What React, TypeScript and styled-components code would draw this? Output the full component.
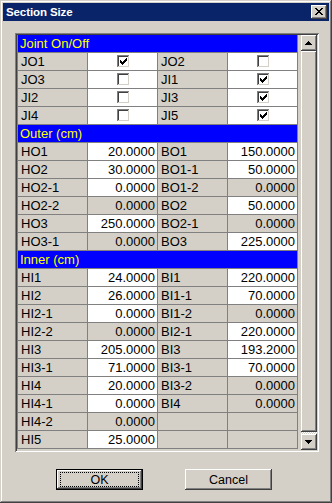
import styled, { createGlobalStyle, css } from 'styled-components';

const Global = createGlobalStyle`
	html, body {
		margin: 0;
		padding: 0;
		background: #d4d0c8;
	}
	* {
		box-sizing: border-box;
	}
`;

const FACE = '#d4d0c8';
const SHADOW = '#808080';
const DARK = '#404040';

type Row =
	| { kind: 'head'; title: string }
	| { kind: 'check'; a: string; av: boolean; b: string; bv: boolean }
	| { kind: 'value'; a?: string; av?: string; aEdit?: boolean; b?: string; bv?: string; bEdit?: boolean };

const rows: Row[] = [
	{ kind: 'head', title: 'Joint On/Off' },
	{ kind: 'check', a: 'JO1', av: true, b: 'JO2', bv: false },
	{ kind: 'check', a: 'JO3', av: false, b: 'JI1', bv: true },
	{ kind: 'check', a: 'JI2', av: false, b: 'JI3', bv: true },
	{ kind: 'check', a: 'JI4', av: false, b: 'JI5', bv: true },
	{ kind: 'head', title: 'Outer (cm)' },
	{ kind: 'value', a: 'HO1', av: '20.0000', aEdit: true, b: 'BO1', bv: '150.0000', bEdit: true },
	{ kind: 'value', a: 'HO2', av: '30.0000', aEdit: true, b: 'BO1-1', bv: '50.0000', bEdit: true },
	{ kind: 'value', a: 'HO2-1', av: '0.0000', aEdit: true, b: 'BO1-2', bv: '0.0000' },
	{ kind: 'value', a: 'HO2-2', av: '0.0000', b: 'BO2', bv: '50.0000', bEdit: true },
	{ kind: 'value', a: 'HO3', av: '250.0000', aEdit: true, b: 'BO2-1', bv: '0.0000' },
	{ kind: 'value', a: 'HO3-1', av: '0.0000', b: 'BO3', bv: '225.0000', bEdit: true },
	{ kind: 'head', title: 'Inner (cm)' },
	{ kind: 'value', a: 'HI1', av: '24.0000', aEdit: true, b: 'BI1', bv: '220.0000', bEdit: true },
	{ kind: 'value', a: 'HI2', av: '26.0000', aEdit: true, b: 'BI1-1', bv: '70.0000', bEdit: true },
	{ kind: 'value', a: 'HI2-1', av: '0.0000', aEdit: true, b: 'BI1-2', bv: '0.0000' },
	{ kind: 'value', a: 'HI2-2', av: '0.0000', b: 'BI2-1', bv: '220.0000', bEdit: true },
	{ kind: 'value', a: 'HI3', av: '205.0000', aEdit: true, b: 'BI3', bv: '193.2000', bEdit: true },
	{ kind: 'value', a: 'HI3-1', av: '71.0000', aEdit: true, b: 'BI3-1', bv: '70.0000', bEdit: true },
	{ kind: 'value', a: 'HI4', av: '20.0000', aEdit: true, b: 'BI3-2', bv: '0.0000' },
	{ kind: 'value', a: 'HI4-1', av: '0.0000', aEdit: true, b: 'BI4', bv: '0.0000' },
	{ kind: 'value', a: 'HI4-2', av: '0.0000' },
	{ kind: 'value', a: 'HI5', av: '25.0000', aEdit: true },
];

const raised = css`
	background: ${FACE};
	box-shadow:
		inset -1px -1px ${DARK},
		inset 1px 1px #fff,
		inset -2px -2px ${SHADOW},
		inset 2px 2px ${FACE};
`;

function Pixels({ pts, color }: { pts: string[]; color: string }) {
	// each string is a row, '#' = pixel
	const out: JSX.Element[] = [];
	pts.forEach((line, y) =>
		line.split('').forEach((c, x) => {
			if (c === '#') out.push(<rect key={`${x}-${y}`} x={x} y={y} width={1} height={1} fill={color} />);
		})
	);
	return <>{out}</>;
}

const CHECK = ['......#', '.....##', '#...###', '##.###.', '#####..', '.###...', '..#....'];
const CLOSE_X = ['##....##', '.##..##.', '..####..', '...##...', '..####..', '.##..##.', '##....##'];
const UP = ['...#...', '..###..', '.#####.', '#######'];
const DOWN = ['#######', '.#####.', '..###..', '...#...'];

function CheckBox({ checked }: { checked: boolean }) {
	return (
		<svg width='13' height='13' viewBox='0 0 13 13' shapeRendering='crispEdges'>
			<rect x='0' y='0' width='13' height='13' fill='#fff' />
			<rect x='0' y='0' width='12' height='1' fill={SHADOW} />
			<rect x='0' y='0' width='1' height='12' fill={SHADOW} />
			<rect x='1' y='1' width='10' height='1' fill={DARK} />
			<rect x='1' y='1' width='1' height='10' fill={DARK} />
			<rect x='1' y='11' width='11' height='1' fill={FACE} />
			<rect x='11' y='1' width='1' height='11' fill={FACE} />
			{checked && (
				<g transform='translate(3 3)'>
					<Pixels pts={CHECK} color='#000' />
				</g>
			)}
		</svg>
	);
}

export default function App() {
	return (
		<>
			<Global />
			<Window>
				<TitleBar>
					<Title>Section Size</Title>
					<CloseButton>
						<svg width='8' height='7' viewBox='0 0 8 7' shapeRendering='crispEdges'>
							<Pixels pts={CLOSE_X} color='#000' />
						</svg>
					</CloseButton>
				</TitleBar>

				<Panel>
					<Grid>
						{rows.map((r, i) => {
							if (r.kind === 'head') return <HeadCell key={i}>{r.title}</HeadCell>;
							if (r.kind === 'check')
								return [
									<Cell key={i + 'a'} $tone='label'>{r.a}</Cell>,
									<Cell key={i + 'av'} $tone='edit' $center>
										<CheckBox checked={r.av} />
									</Cell>,
									<Cell key={i + 'b'} $tone='label'>{r.b}</Cell>,
									<Cell key={i + 'bv'} $tone='edit' $center>
										<CheckBox checked={r.bv} />
									</Cell>,
								];
							return [
								<Cell key={i + 'a'} $tone='label'>{r.a}</Cell>,
								<Cell key={i + 'av'} $tone={r.aEdit ? 'edit' : 'label'} $right>{r.av}</Cell>,
								<Cell key={i + 'b'} $tone='label'>{r.b}</Cell>,
								<Cell key={i + 'bv'} $tone={r.bEdit ? 'edit' : 'label'} $right>{r.bv}</Cell>,
							];
						})}
					</Grid>

					<ScrollBar>
						<ScrollButton>
							<svg width='7' height='4' viewBox='0 0 7 4' shapeRendering='crispEdges'>
								<Pixels pts={UP} color='#000' />
							</svg>
						</ScrollButton>
						<Thumb />
						<Track />
						<ScrollButton>
							<svg width='7' height='4' viewBox='0 0 7 4' shapeRendering='crispEdges'>
								<Pixels pts={DOWN} color='#000' />
							</svg>
						</ScrollButton>
					</ScrollBar>
				</Panel>

				<Buttons>
					<DialogButton $default>
						<Focus>OK</Focus>
					</DialogButton>
					<DialogButton>Cancel</DialogButton>
				</Buttons>
			</Window>
		</>
	);
}

const Window = styled.div`
	width: 332px;
	height: 503px;
	padding: 3px;
	background: ${FACE};
	box-shadow:
		inset -1px -1px ${DARK},
		inset 1px 1px ${FACE},
		inset -2px -2px ${SHADOW},
		inset 2px 2px #fff;
	display: flex;
	flex-direction: column;
	font-family: 'Liberation Sans', Arial, sans-serif;
`;

const TitleBar = styled.div`
	height: 18px;
	background: #0a246a;
	display: flex;
	align-items: center;
	justify-content: space-between;
	padding: 0 2px 0 2px;
`;

const Title = styled.span`
	color: #fff;
	font-weight: bold;
	font-size: 11.5px;
	letter-spacing: -0.1px;
	padding-left: 1px;
`;

const CloseButton = styled.div`
	${raised};
	width: 16px;
	height: 14px;
	display: flex;
	align-items: center;
	justify-content: center;
	padding: 0 1px 1px 0;
	svg {
		display: block;
	}
`;

const Panel = styled.div`
	margin: 12px 0 0 12px;
	width: 304px;
	height: 419px;
	padding: 2px;
	display: flex;
	background: ${FACE};
	box-shadow:
		inset 1px 1px ${SHADOW},
		inset -1px -1px #fff,
		inset 2px 2px ${DARK},
		inset -2px -2px ${FACE};
`;

const Grid = styled.div`
	display: grid;
	grid-template-columns: repeat(4, 69px);
	grid-auto-rows: 17px;
	gap: 1px;
	padding: 0 1px 1px 1px;
	background: ${SHADOW};
	width: 281px;
	height: 414px;
	font-size: 13px;
	line-height: 17px;
	color: #000;
`;

const HeadCell = styled.div`
	grid-column: 1 / -1;
	background: #0000ff;
	color: #ffff00;
	padding-left: 2px;
	white-space: nowrap;
`;

const Cell = styled.div<{ $tone: 'label' | 'edit'; $right?: boolean; $center?: boolean }>`
	background: ${({ $tone }) => ($tone === 'edit' ? '#fff' : FACE)};
	white-space: nowrap;
	overflow: hidden;
	padding: 0 2px 0 3px;
	display: flex;
	align-items: center;
	justify-content: ${({ $right, $center }) => ($center ? 'center' : $right ? 'flex-end' : 'flex-start')};
	svg {
		display: block;
		margin-left: 1px;
	}
`;

const ScrollBar = styled.div`
	margin-left: 3px;
	width: 16px;
	height: 415px;
	display: flex;
	flex-direction: column;
`;

const ScrollButton = styled.div`
	${raised};
	width: 16px;
	height: 16px;
	display: flex;
	align-items: center;
	justify-content: center;
	padding: 0 1px 1px 0;
	svg {
		display: block;
	}
`;

const Thumb = styled.div`
	${raised};
	flex: 1;
`;

const Track = styled.div`
	height: 2px;
	background: repeating-conic-gradient(#fff 0 25%, ${FACE} 0 50%) 0 0 / 2px 2px;
`;

const Buttons = styled.div`
	display: flex;
	gap: 42px;
	margin: 17px 0 0 53px;
`;

const DialogButton = styled.div<{ $default?: boolean }>`
	${raised};
	width: 87px;
	height: 21px;
	display: flex;
	align-items: center;
	justify-content: center;
	font-size: 12.5px;
	color: #000;
	${({ $default }) =>
		$default &&
		css`
			border: 1px solid #000;
			padding: 2px;
		`}
`;

const Focus = styled.div`
	width: 100%;
	height: 100%;
	display: flex;
	align-items: center;
	justify-content: center;
	outline: 1px dotted #000;
	outline-offset: -1px;
	margin: 0 1px;
`;
